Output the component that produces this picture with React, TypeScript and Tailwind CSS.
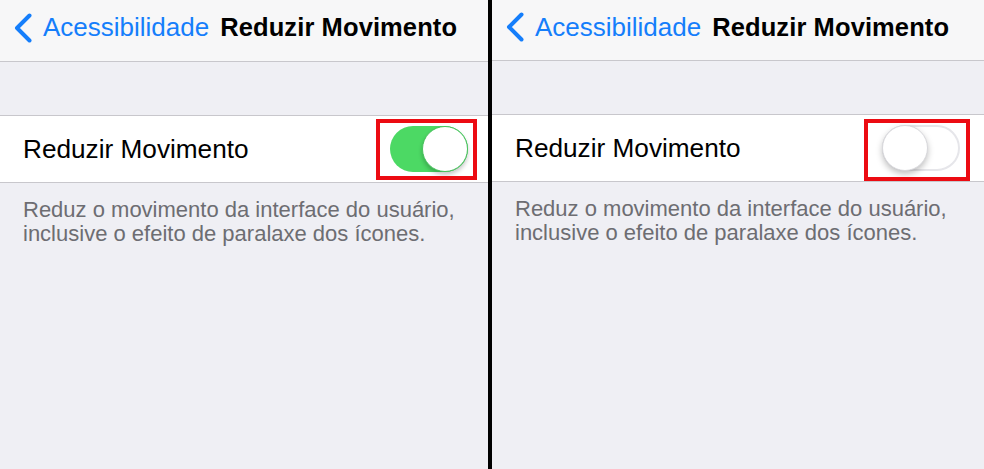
import React from "react";

type PanelProps = {
  on: boolean;
  rowPad: string;
  markInset: string;
  navBorder: string;
};

function BackChevron() {
  return (
    <svg width="20" height="30" viewBox="0 0 20 30" className="shrink-0">
      <path
        d="M16.5 2.5 L4 15 L16.5 27.5"
        fill="none"
        stroke="#157efb"
        strokeWidth="4"
        strokeLinecap="round"
        strokeLinejoin="round"
      />
    </svg>
  );
}

function Toggle({ on }: { on: boolean }) {
  if (on) {
    return (
      <div className="relative h-[46px] w-[78px] rounded-full bg-[#4cd964]">
        <div className="absolute right-0 top-0 h-[46px] w-[46px] rounded-full border border-[#47c25c] bg-white shadow-[0_3px_4px_rgba(0,0,0,0.22)]" />
      </div>
    );
  }
  return (
    <div className="relative h-[46px] w-[78px] rounded-full border-2 border-[#e6e6ea] bg-white">
      <div className="absolute -left-[2px] -top-[2px] h-[46px] w-[46px] rounded-full border border-[#d8d8dc] bg-white shadow-[0_3px_6px_rgba(0,0,0,0.25)]" />
    </div>
  );
}

function Panel({ on, rowPad, markInset, navBorder }: PanelProps) {
  return (
    <div className="flex h-full flex-1 flex-col bg-[#efeff4]">
      <div
        className={`flex items-center bg-[#f7f7f8] pb-[6px] pl-[13px] ${navBorder} border-b border-[#c8c7cc]`}
      >
        <BackChevron />
        <span className="ml-[10px] text-[26px] text-[#157efb]">Acessibilidade</span>
        <span className="ml-[11px] text-[25.5px] font-bold tracking-[0.1px] text-black">
          Reduzir Movimento
        </span>
      </div>
      <div className="h-[53px]" />
      <div
        className={`flex h-[68px] items-center justify-between border-y border-[#c8c7cc] bg-white pl-[23px] ${rowPad}`}
      >
        <span className="pt-[1px] text-[26.2px] text-black">Reduzir Movimento</span>
        <div className="relative">
          <Toggle on={on} />
          <span className={`pointer-events-none absolute border-[4px] border-[#ec0b12] ${markInset}`} />
        </div>
      </div>
      <p className="pl-[23px] pt-[15px] text-[22px] leading-[24px] text-[#6d6d72]">
        Reduz o movimento da interface do usuário,
        <br />
        inclusive o efeito de paralaxe dos ícones.
      </p>
    </div>
  );
}

export default function App() {
  return (
    <div
      className="flex h-[469px] w-[984px] overflow-hidden bg-[#efeff4]"
      style={{ fontFamily: '"Liberation Sans", Arial, sans-serif' }}
    >
      <div className="flex h-full w-[488px]">
        <Panel
          on={true}
          rowPad="pr-[20px]"
          markInset="-left-[14px] -right-[9px] -top-[7px] -bottom-[8px]"
          navBorder="h-[62px]"
        />
      </div>
      <div className="h-full w-[4px] bg-black" />
      <div className="flex h-full flex-1">
        <Panel
          on={false}
          rowPad="pr-[24px]"
          markInset="-left-[18px] -right-[10px] -top-[6px] -bottom-[10px]"
          navBorder="h-[61px]"
        />
      </div>
    </div>
  );
}
